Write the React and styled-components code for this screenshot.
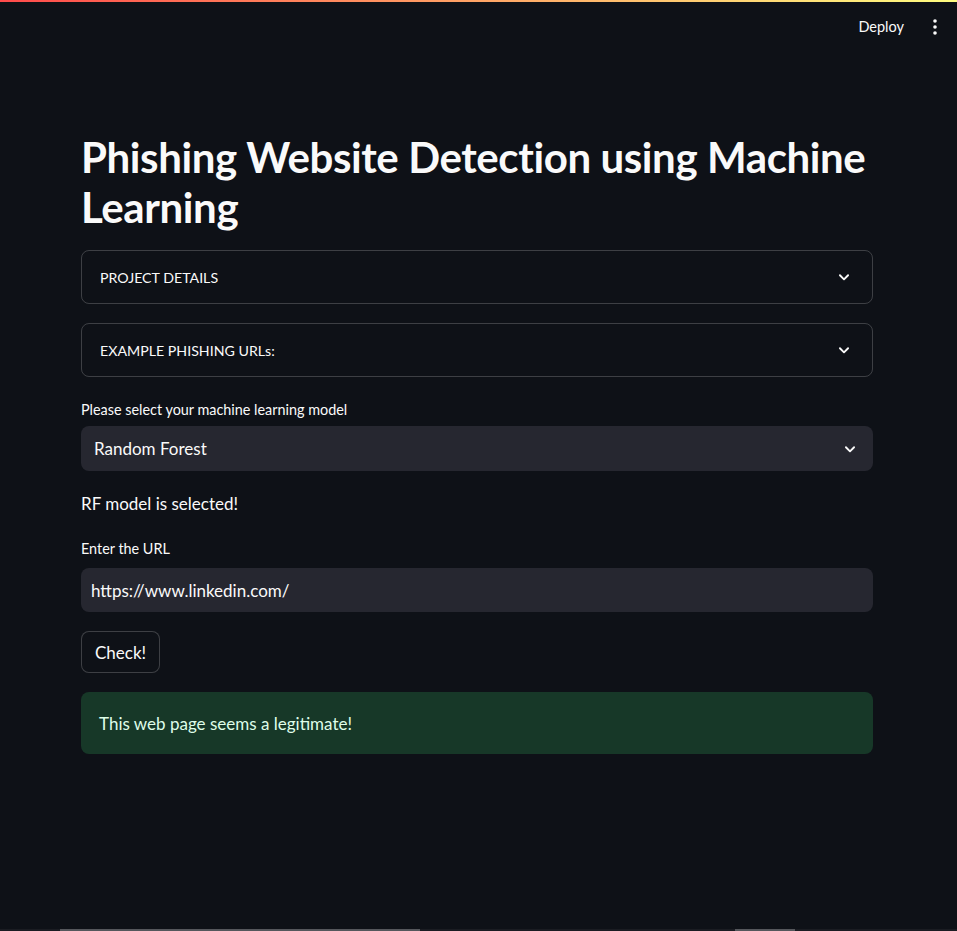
import React from 'react';
import styled, { createGlobalStyle } from 'styled-components';

const GlobalStyle = createGlobalStyle`
  html, body {
    margin: 0;
    padding: 0;
    background: #0e1117;
  }
  body {
    font-family: Lato, "Noto Sans", sans-serif;
    color: #fafafa;
  }
`;

const Page = styled.div`
  min-height: 931px;
  display: flex;
  flex-direction: column;
  background: #0e1117;
`;

const Decoration = styled.div`
  height: 2px;
  background: linear-gradient(90deg, #ff4b4b, #fffd80);
`;

const Header = styled.header`
  height: 50px;
  display: flex;
  align-items: center;
  justify-content: flex-end;
  gap: 29px;
  padding-right: 20px;
`;

const DeployButton = styled.span`
  font-size: 14.5px;
  color: #fafafa;
  margin-top: -1px;
`;

const Main = styled.main`
  width: 792px;
  margin-left: 81px;
  padding-top: 80px;
  display: flex;
  flex-direction: column;
`;

const Title = styled.h1`
  margin: 0 0 18px;
  font-size: 42px;
  font-weight: 700;
  line-height: 50px;
  letter-spacing: -0.4px;
`;

const Expander = styled.div`
  height: 52px;
  border: 1px solid rgba(250, 250, 250, 0.2);
  border-radius: 8px;
  display: flex;
  align-items: center;
  justify-content: space-between;
  padding: 0 21px 0 18px;
  margin-bottom: 19px;
  font-size: 14.2px;
`;

const Label = styled.div`
  font-size: 14.4px;
  line-height: 20px;
  margin: ${p => p.$top}px 0 ${p => p.$bottom}px;
`;

const Field = styled.div`
  height: ${p => p.$h}px;
  border-radius: 8px;
  background: #262730;
  display: flex;
  align-items: center;
  justify-content: space-between;
  padding: 0 16px 0 ${p => p.$pad}px;
  font-size: 17px;
`;

const Info = styled.div`
  font-size: 17px;
  line-height: 24px;
  margin-top: 21px;
`;

const Button = styled.button`
  align-self: flex-start;
  margin-top: 19px;
  height: 42px;
  padding: 0 13px;
  border: 1px solid rgba(250, 250, 250, 0.2);
  border-radius: 8px;
  background: #0e1117;
  color: #fafafa;
  font-family: inherit;
  font-size: 17px;
`;

const Alert = styled.div`
  margin-top: 19px;
  height: 62px;
  border-radius: 8px;
  background: #173828;
  color: #dffde9;
  display: flex;
  align-items: center;
  padding: 0 18px;
  font-size: 17px;
`;

const BottomBar = styled.div`
  position: fixed;
  left: 0;
  right: 0;
  bottom: 0;
  height: 2px;
  background: #1a1c22;
`;

const BarPiece = styled.div`
  position: absolute;
  top: 0;
  height: 2px;
  left: ${p => p.$left}px;
  width: ${p => p.$w}px;
  background: #55575c;
`;

const Chevron = () => (
  <svg width="14" height="14" viewBox="0 0 24 24" fill="none" stroke="#fafafa" strokeWidth="3.2" strokeLinecap="round" strokeLinejoin="round">
    <polyline points="5 9 12 16 19 9" />
  </svg>
);

const Kebab = () => (
  <svg width="4" height="16" viewBox="0 0 4 16" fill="#fafafa">
    <circle cx="2" cy="2" r="1.8" />
    <circle cx="2" cy="8" r="1.8" />
    <circle cx="2" cy="14" r="1.8" />
  </svg>
);

export default function App() {
  return (
    <Page>
      <GlobalStyle />
      <Decoration />
      <Header>
        <DeployButton>Deploy</DeployButton>
        <Kebab />
      </Header>
      <Main>
        <Title>Phishing Website Detection using Machine Learning</Title>
        <Expander>
          <span>PROJECT DETAILS</span>
          <Chevron />
        </Expander>
        <Expander>
          <span>EXAMPLE PHISHING URLs:</span>
          <Chevron />
        </Expander>
        <Label $top={4} $bottom={6}>Please select your machine learning model</Label>
        <Field $h={45} $pad={13}>
          <span>Random Forest</span>
          <Chevron />
        </Field>
        <Info>RF model is selected!</Info>
        <Label $top={23} $bottom={9}>Enter the URL</Label>
        <Field $h={44} $pad={10}>
          <span>https://www.linkedin.com/</span>
        </Field>
        <Button>Check!</Button>
        <Alert>This web page seems a legitimate!</Alert>
      </Main>
      <BottomBar>
        <BarPiece $left={60} $w={360} />
        <BarPiece $left={735} $w={60} />
      </BottomBar>
    </Page>
  );
}
